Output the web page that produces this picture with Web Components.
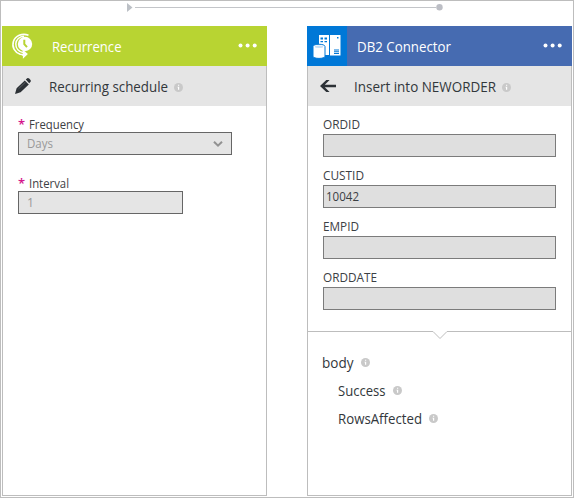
<!DOCTYPE html>
<html lang="en"><head><meta charset="utf-8"><title>Workflow designer</title>
<style>html,body{margin:0;padding:0;overflow:hidden;background:#fff}</style></head>
<body><flow-designer></flow-designer>
<script>
const define = (name, html, setup) => customElements.define(name, class extends HTMLElement {
  connectedCallback() {
    if (this.shadowRoot) return;
    const root = this.attachShadow({mode: 'open'});
    const t = document.createElement('template');
    t.innerHTML = html;
    root.append(t.content.cloneNode(true));
    if (setup) setup.call(this, root);
  }
});

// A single line of text, condensed or widened to fill the requested width.
define('fit-text', `<style>:host{display:block;white-space:nowrap;flex:none}span{display:inline-block;transform-origin:0 50%}</style><span><slot></slot></span>`,
function (root) {
  const s = root.querySelector('span');
  const want = +this.getAttribute('width');
  s.style.transform = 'scaleX(' + want / s.getBoundingClientRect().width + ')';
  this.style.width = want + 'px';
});

define('info-dot', `<style>:host{display:block;width:9px;height:9px;flex:none}svg{display:block}</style>
<svg width="9" height="9" viewBox="0 0 9 9"><circle cx="4.5" cy="4.5" r="4.5" fill="#c9c9c9"/><path d="M4 1.7h1.2v1.1H4zM3.5 3.7h1.7v3H4V4.5h-.5z" fill="#fff"/></svg>`);

define('more-dots', `<style>:host{display:block;margin:0 10px 2px auto}svg{display:block}</style>
<svg width="19" height="5" viewBox="0 0 19 5"><g fill="#fff"><circle cx="2.5" cy="2.5" r="2"/><circle cx="9.6" cy="2.5" r="2"/><circle cx="16.7" cy="2.5" r="2"/></g></svg>`);

define('flow-line', `<style>:host{display:block;height:25px}svg{display:block}</style>
<svg width="572" height="25" viewBox="1 1 572 25"><path d="M127 3l5.5 4.5-5.5 4.5z" fill="#bcc0c6"/><path d="M135 7.5h301" stroke="#c3c5c9"/><circle cx="439.5" cy="7.3" r="3.2" fill="#bcbec5"/></svg>`);

define('flow-card', `<style>
:host{display:flex;flex-direction:column;width:265px;height:470px;box-sizing:border-box}
.head,.sub{height:40px;display:flex;align-items:center;flex:none}
.head{color:#fff;background:var(--head)}
.sub{color:#32373b;background:#e5e5e5;border:solid #bdbdbd;border-width:0 1px;box-sizing:border-box}
.body{flex:1;border:1px solid #bdbdbd;border-top:0;background:#fff}
</style><div class="head"><slot name="head"></slot></div><div class="sub"><slot name="sub"></slot></div><div class="body"><slot></slot></div>`);

define('form-field', `<style>
:host{display:block;height:var(--pitch);font-size:12px;color:#3c4044}
.label{display:flex;height:17px;line-height:17px}
.star{color:#d4148c;width:11px;font-size:13px;font-weight:600}
.box{box-sizing:border-box;height:23px;border:1px solid var(--edge);background:var(--fill);display:flex;align-items:center;color:var(--ink);padding-left:var(--inset);margin-top:var(--gap)}
svg{margin-left:auto;margin-right:7px}
</style><div class="label"><slot></slot></div><div class="box"><slot name="value"></slot></div>`,
function (root) {
  const b = root.querySelector('.box');
  b.style.width = this.getAttribute('box') + 'px';
  if (this.hasAttribute('required')) root.querySelector('.label').insertAdjacentHTML('afterbegin', '<span class="star">*</span>');
  if (this.hasAttribute('select')) b.insertAdjacentHTML('beforeend', '<svg width="12" height="8" viewBox="0 0 12 8"><path d="M2 1.7l4 4 4-4" fill="none" stroke="#929292" stroke-width="2"/></svg>');
});

define('output-row', `<style>:host{display:flex;height:28px;align-items:center;gap:7px;font-size:14.3px;color:#32373b}</style><slot></slot><info-dot></info-dot>`);

define('flow-designer', `<style>
:host{display:block;width:574px;height:498px;box-sizing:border-box;border:1px solid #bdbdbd;font-family:"Open Sans","Noto Sans",sans-serif;font-size:14.3px;background:#fff}
.cards{display:flex;gap:40px;padding-left:1px}
svg{display:block;flex:none}
.recur{--head:#b8d432}.db{--head:#466bb1}
.left{padding:10px 0 0 15px;--pitch:59px;--edge:#666;--fill:#e5e5e5;--ink:#999;--inset:8px;--gap:-1px}
.right{padding:10px 0 0 15px;height:216px;box-sizing:border-box;--pitch:51px;--edge:#7b7b7b;--fill:#dfdfdf;--ink:#3c4044;--inset:2px;--gap:1px}
.out{padding:9px 0 0 14px}.child{padding-left:16px}
.sub-info{margin:3px 0 0 6px}
</style>
<flow-line></flow-line>
<div class="cards">
<flow-card class="recur">
 <svg slot="head" width="50" height="40" viewBox="2 26 50 40"><circle cx="25" cy="44" r="7.2" fill="#fff"/><path d="M24.3 39.8v4.4l2.7 3" fill="none" stroke="#b8d432" stroke-width="2"/><path d="M28.5 35.2c-6.5-2.4-13.2.6-15.1 6.2-1.8 5.6 1.5 11.2 6.8 12.9l3.8.3" fill="none" stroke="#fff" stroke-width="1.6"/><path d="M24 36.2c-4.5.2-8 3.4-8.2 7.6-.2 4.6 3 8.2 8 8.9" fill="none" stroke="#fff" stroke-width="1.5"/><path d="M22.6 49.6l5.3 4.4-5 4.8v-2.9l-2.6-2h2.6z" fill="#fff"/></svg>
 <fit-text slot="head" width="69.5">Recurrence</fit-text><more-dots slot="head"></more-dots>
 <svg slot="sub" width="46" height="40" viewBox="3 66 46 40"><path d="M15 94l1.6-5.8 8.2-7.8 4 4-8.2 7.9zM25.8 79.4l1.4-1.1q1-.6 2 .3l1.3 1.3q.9 1-.1 2l-1.2 1.4z" fill="#2c3136"/><path d="M18.5 88.8l7-6.7" stroke="#777b7e" stroke-width=".6"/></svg>
 <fit-text slot="sub" width="119">Recurring schedule</fit-text><info-dot slot="sub" class="sub-info"></info-dot>
 <div class="left">
  <form-field box="214" required select><fit-text width="55">Frequency</fit-text><fit-text slot="value" width="26">Days</fit-text></form-field>
  <form-field box="165" required><fit-text width="40">Interval</fit-text><fit-text slot="value" width="7">1</fit-text></form-field>
 </div>
</flow-card>
<flow-card class="db">
 <svg slot="head" width="50" height="40" viewBox="307 26 50 40"><path d="M307 26h40v40h-40z" fill="#0078d7"/><path d="M319 35h10v20h-10zM330 35h10.5v20.5H330z" fill="#fff"/><path d="M320.5 37.5h2.5v2h-2.5zM324.5 37.5h2.5v2h-2.5zM320.5 41h2.5v1.3h-2.5zM324.5 41h2.5v1.3h-2.5zM337 37h1.5v1.5H337zM334 49.5h5v1h-5zM334 51.2h5v1h-5zM334 53h5v1h-5z" fill="#0078d7"/><path d="M313 46.5c0-3 12-3 12 0v9.8c0 2.8-12 2.8-12 0z" fill="#fff" stroke="#0078d7"/><ellipse cx="319" cy="46.7" rx="4.2" ry="1.2" fill="#c7dff5"/></svg>
 <fit-text slot="head" width="94">DB2 Connector</fit-text><more-dots slot="head"></more-dots>
 <svg slot="sub" width="46" height="40" viewBox="308 66 46 40"><path d="M320 86l6.3-6h3.3l-4.8 4.8H336v2.4h-11.2l4.8 4.8h-3.3z" fill="#2c3136"/></svg>
 <fit-text slot="sub" width="142">Insert into NEWORDER</fit-text><info-dot slot="sub" class="sub-info"></info-dot>
 <div class="right">
  <form-field box="233"><fit-text width="37">ORDID</fit-text></form-field>
  <form-field box="233"><fit-text width="41">CUSTID</fit-text><fit-text slot="value" width="33">10042</fit-text></form-field>
  <form-field box="233"><fit-text width="36">EMPID</fit-text></form-field>
  <form-field box="233"><fit-text width="54">ORDDATE</fit-text></form-field>
 </div>
 <svg width="263" height="17" viewBox="308 322 263 17"><path d="M308 331.5h125l7 7 7-7h124" fill="none" stroke="#bdbdbd"/></svg>
 <div class="out"><output-row><fit-text width="31.5">body</fit-text></output-row><output-row class="child"><fit-text width="47.5">Success</fit-text></output-row><output-row class="child"><fit-text width="84">RowsAffected</fit-text></output-row></div>
</flow-card>
</div>`);
</script></body></html>
